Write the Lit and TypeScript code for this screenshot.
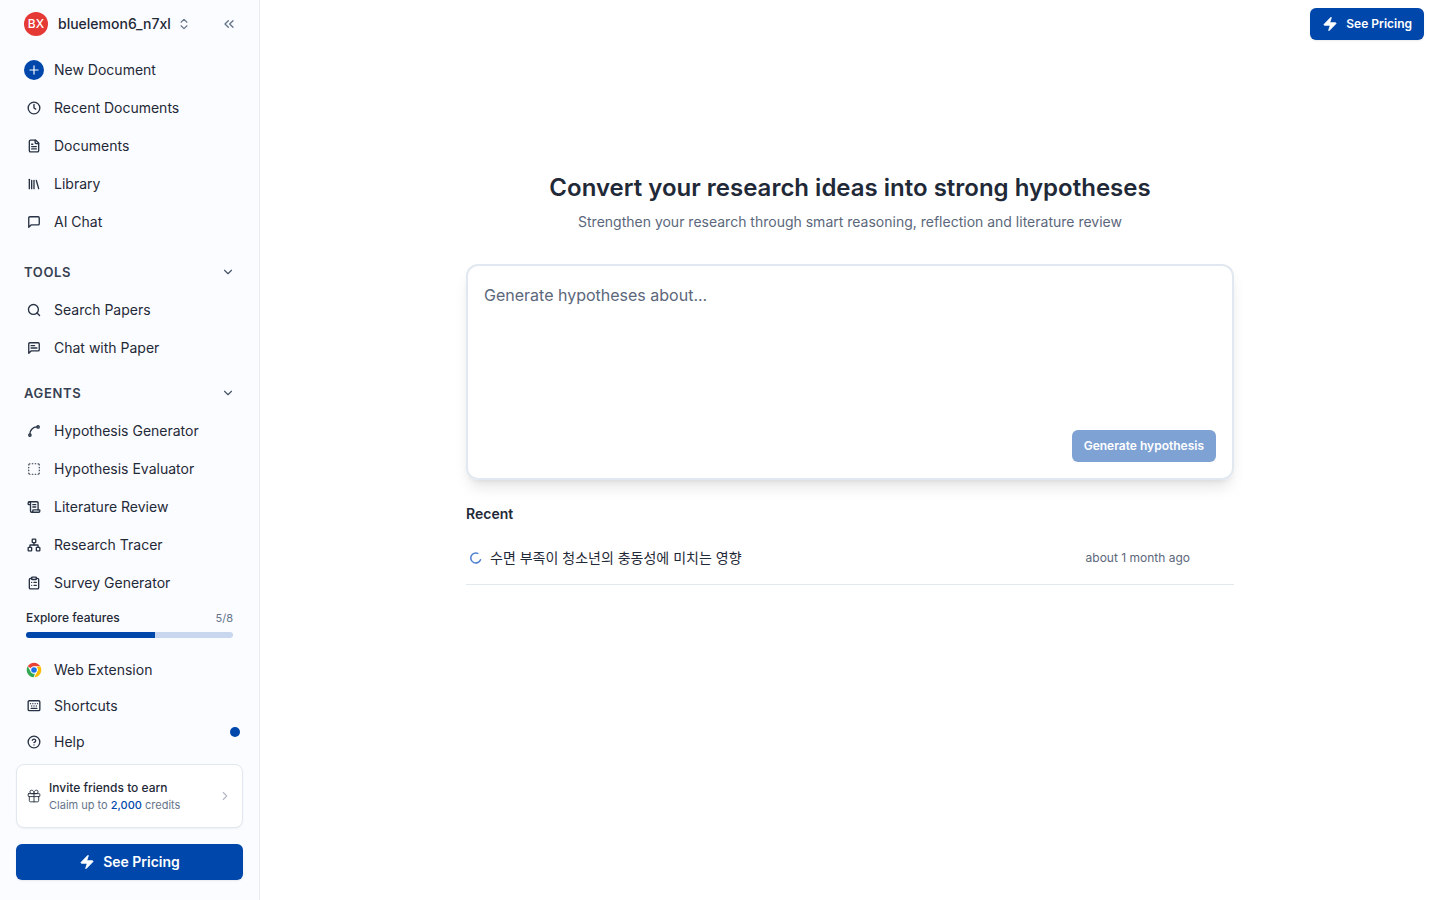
import { LitElement, html, css, svg, nothing, SVGTemplateResult } from "lit";
import { customElement, property } from "lit/decorators.js";

const ICONS: Record<string, SVGTemplateResult> = {
  clock: svg`<circle cx="12" cy="12" r="10"/><path d="M12 6v6l3 2"/>`,
  file: svg`<path d="M15 2H6a2 2 0 0 0-2 2v16a2 2 0 0 0 2 2h12a2 2 0 0 0 2-2V7Z"/><path d="M14 2v4a2 2 0 0 0 2 2h4"/><path d="M10 9H8"/><path d="M16 13H8"/><path d="M16 17H8"/>`,
  library: svg`<path d="m16 6 4 14"/><path d="M12 6v14"/><path d="M8 6v14"/><path d="M4 4v16"/>`,
  chat: svg`<path d="M21 15a2 2 0 0 1-2 2H7l-4 4V5a2 2 0 0 1 2-2h14a2 2 0 0 1 2 2z"/>`,
  search: svg`<circle cx="11" cy="11" r="8.500"/><path d="m21.500 21.500-4.300-4.300"/>`,
  chatText: svg`<path d="M21 15a2 2 0 0 1-2 2H7l-4 4V5a2 2 0 0 1 2-2h14a2 2 0 0 1 2 2z"/><path d="M13 8H7"/><path d="M17 12H7"/>`,
  spline: svg`<circle cx="19" cy="5" r="2"/><circle cx="5" cy="19" r="2"/><path d="M5 17A12 12 0 0 1 17 5"/>`,
  dashed: svg`<path d="M5 3a2 2 0 0 0-2 2"/><path d="M19 3a2 2 0 0 1 2 2"/><path d="M21 19a2 2 0 0 1-2 2"/><path d="M5 21a2 2 0 0 1-2-2"/><path d="M9 3h1"/><path d="M9 21h1"/><path d="M14 3h1"/><path d="M14 21h1"/><path d="M3 9v1"/><path d="M21 9v1"/><path d="M3 14v1"/><path d="M21 14v1"/>`,
  scroll: svg`<path d="M15 12h-5"/><path d="M15 8h-5"/><path d="M19 17V5a2 2 0 0 0-2-2H4"/><path d="M8 21h12a2 2 0 0 0 2-2v-1a1 1 0 0 0-1-1H11a1 1 0 0 0-1 1v1a2 2 0 1 1-4 0V5a2 2 0 1 0-4 0v2a1 1 0 0 0 1 1h3"/>`,
  network: svg`<rect x="16" y="16" width="6" height="6" rx="1"/><rect x="2" y="16" width="6" height="6" rx="1"/><rect x="9" y="2" width="6" height="6" rx="1"/><path d="M5 16v-3a1 1 0 0 1 1-1h12a1 1 0 0 1 1 1v3"/><path d="M12 12V8"/>`,
  clipboard: svg`<rect width="8" height="4" x="8" y="2" rx="1" ry="1"/><path d="M16 4h2a2 2 0 0 1 2 2v14a2 2 0 0 1-2 2H6a2 2 0 0 1-2-2V6a2 2 0 0 1 2-2h2"/><path d="M12 11h4"/><path d="M12 16h4"/><path d="M8 11h.01"/><path d="M8 16h.01"/>`,
  keyboard: svg`<rect x="2" y="3" width="20" height="17" rx="2"/><path d="M6 8h.01"/><path d="M10 8h.01"/><path d="M14 8h.01"/><path d="M18 8h.01"/><path d="M8 12h.01"/><path d="M12 12h.01"/><path d="M16 12h.01"/><path d="M7 16h10"/>`,
  help: svg`<circle cx="12" cy="12" r="10"/><path d="M9.09 9a3 3 0 0 1 5.83 1c0 2-3 3-3 3"/><path d="M12 17h.01"/>`,
  gift: svg`<rect x="2" y="8" width="20" height="5" rx="1"/><path d="M12 8v14"/><path d="M20 13v7a2 2 0 0 1-2 2H6a2 2 0 0 1-2-2v-7"/><path d="M12 8H8a3 3 0 1 1 0-6c3 0 4 3 4 6 0-3 1-6 4-6a3 3 0 1 1 0 6z"/>`,
  plus: svg`<path d="M5 12h14"/><path d="M12 5v14"/>`,
  down: svg`<path d="m6 9 6 6 6-6"/>`,
  right: svg`<path d="m9 18 6-6-6-6"/>`,
  updown: svg`<path d="m7 15 5 5 5-5"/><path d="m7 9 5-5 5 5"/>`,
  collapse: svg`<path d="m11 17-5-5 5-5"/><path d="m18 17-5-5 5-5"/>`,
  bolt: svg`<path fill="currentColor" d="M4 14a1 1 0 0 1-.78-1.630l9.900-10.200a.5.5 0 0 1 .86.460l-1.920 6.020A1 1 0 0 0 13 10h7a1 1 0 0 1 .78 1.630l-9.900 10.200a.5.5 0 0 1-.86-.460l1.920-6.020A1 1 0 0 0 11 14z"/>`,
  spinner: svg`<path d="M21 15.500A10 10 0 1 1 15.500 2.700"/>`,
  chrome: svg`<g stroke="none"><circle cx="12" cy="12" r="11" fill="#fff"/><path fill="#ea4335" d="M2.500 6.500A11 11 0 0 1 21.500 6.500H12a5.500 5.500 0 0 0-4.760 2.750z"/><path fill="#fbbc04" d="M21.500 6.500A11 11 0 0 1 12.500 23l4.260-8.250A5.500 5.500 0 0 0 15.500 7.500z"/><path fill="#34a853" d="M11.500 23A11 11 0 0 1 2.500 6.500l4.740 8.250A5.500 5.500 0 0 0 13.500 17.300z"/><circle cx="12" cy="12" r="5.200" fill="#fff"/><circle cx="12" cy="12" r="4.200" fill="#1a73e8"/></g>`,
};

@customElement("ui-icon")
class UiIcon extends LitElement {
  @property() name = "";
  @property({ type: Number }) size = 14;
  static styles = css`
    :host { display: inline-flex; flex: none; }
    .icon {
      display: block;
      fill: none;
      stroke: currentColor;
      stroke-width: 2;
      stroke-linecap: round;
      stroke-linejoin: round;
    }
    .bolt { stroke-width: 1.2; }
    .gift { stroke-width: 1.5; }
    .spinner { stroke-width: 3; }
    .spline, .file, .library, .chat, .chatText, .scroll, .network, .clipboard, .clock, .keyboard, .help, .search { stroke-width: 2.3; }
  `;
  render() {
    return html`<svg class="icon ${this.name}" width=${this.size} height=${this.size} viewBox="0 0 24 24" aria-hidden="true">${ICONS[this.name] ?? nothing}</svg>`;
  }
}

interface Item {
  icon: string;
  label: string;
}

const PRIMARY: Item[] = [
  { icon: "clock", label: "Recent Documents" },
  { icon: "file", label: "Documents" },
  { icon: "library", label: "Library" },
  { icon: "chat", label: "AI Chat" },
];
const TOOLS: Item[] = [
  { icon: "search", label: "Search Papers" },
  { icon: "chatText", label: "Chat with Paper" },
];
const AGENTS: Item[] = [
  { icon: "spline", label: "Hypothesis Generator" },
  { icon: "dashed", label: "Hypothesis Evaluator" },
  { icon: "scroll", label: "Literature Review" },
  { icon: "network", label: "Research Tracer" },
  { icon: "clipboard", label: "Survey Generator" },
];
const DONE = 5;
const TOTAL = 8;

@customElement("app-root")
class AppRoot extends LitElement {
  static styles = css`
    :host {
      display: flex;
      min-height: 100vh;
      background: #fff;
      color: #1f2937;
      font: 400 14px/20px Inter, "Noto Sans CJK KR", sans-serif;
    }
    * { box-sizing: border-box; }
    button, textarea { font: inherit; color: inherit; border: 0; background: none; padding: 0; margin: 0; cursor: pointer; }
    a { color: inherit; text-decoration: none; }
    h1, h2, p, ul { margin: 0; padding: 0; }
    ul { list-style: none; }

    .sidebar {
      flex: none;
      width: 260px;
      height: 100vh;
      display: flex;
      flex-direction: column;
      background: #fbfcff;
      border-right: 1px solid #e9edf3;
    }
    .account {
      display: flex;
      align-items: center;
      justify-content: space-between;
      height: 48px;
      padding: 0 22px 0 24px;
    }
    .user { display: flex; align-items: center; font-weight: 500; }
    .avatar {
      display: grid;
      place-items: center;
      width: 24px;
      height: 24px;
      margin-right: 10px;
      border-radius: 50%;
      background: #e53935;
      color: #fff;
      font-size: 12px;
    }
    .user ui-icon { margin-left: 6px; }
    .collapse { display: flex; }
    .muted { color: #64748b; }
    .nav { flex: 1; min-height: 0; overflow: hidden; padding: 3px 24px 0; }
    .item { display: flex; align-items: center; gap: 10px; height: 38px; }
    .slot { display: grid; place-items: center; width: 20px; height: 20px; color: #273244; }
    .add { border-radius: 50%; background: #0047ab; color: #fff; }
    .section {
      display: flex;
      align-items: center;
      justify-content: space-between;
      width: 100%;
      height: 38px;
      margin-top: 7px;
      color: #374151;
      font-size: 13px;
      font-weight: 600;
      letter-spacing: 0.05em;
    }
    .primary { margin-bottom: 12px; }
    .section ui-icon { color: #475569; }

    .footer { padding: 8px 16px 20px; }
    .explore { padding: 0 10px; font-size: 12px; line-height: 16px; font-weight: 500; }
    .explore-head { display: flex; justify-content: space-between; }
    .count { color: #64748b; font-size: 11px; font-weight: 400; }
    .track { height: 6px; margin-top: 6px; border-radius: 3px; background: #c8d7ed; overflow: hidden; }
    .fill { height: 100%; background: #0047ab; }
    .links { padding: 14px 8px 4px; }
    .links li { position: relative; }
    .links .item { height: 36px; }
    .dot { position: absolute; top: 3px; right: -5px; width: 10px; height: 10px; border-radius: 50%; background: #0047ab; }
    .invite {
      display: flex;
      align-items: center;
      height: 64px;
      padding: 0 10px;
      gap: 8px;
      border: 1px solid #e2e8f0;
      border-radius: 8px;
      background: #fff;
      box-shadow: 0 1px 2px rgb(0 0 0 / 5%);
    }
    .invite-text { flex: 1; font-size: 11px; line-height: 16px; color: #64748b; }
    .invite-title { font-size: 12px; line-height: 18px; font-weight: 500; color: #1f2937; }
    .credits { color: #0047ab; font-weight: 500; }
    .faint { color: #b4bbc6; }
    .btn {
      display: flex;
      align-items: center;
      justify-content: center;
      gap: 8px;
      height: 32px;
      padding: 0 12px;
      border-radius: 6px;
      background: #0047ab;
      color: #fff;
      font-size: 12px;
      font-weight: 600;
      box-shadow: 0 1px 2px rgb(0 0 0 / 8%);
    }
    .btn-wide { width: 100%; height: 36px; margin-top: 16px; font-size: 14px; }
    .btn-off { opacity: .5; box-shadow: none; }

    .main { flex: 1; min-width: 0; }
    .topbar { display: flex; justify-content: flex-end; padding: 8px 16px; }
    .content { max-width: 768px; margin: 124px auto 0; }
    h1 { font-size: 24px; line-height: 32px; font-weight: 600; text-align: center; }
    .lead { margin-top: 8px; text-align: center; color: #5b677b; }
    .composer {
      display: flex;
      flex-direction: column;
      align-items: flex-end;
      margin-top: 32px;
      padding: 16px;
      border: 2px solid #e2e8f0;
      border-radius: 12px;
      box-shadow: 0 10px 15px -3px rgb(0 0 0 / 10%), 0 4px 6px -4px rgb(0 0 0 / 10%);
    }
    textarea { display: block; width: 100%; height: 148px; padding-top: 1px; resize: none; outline: 0; font-size: 16px; line-height: 24px; cursor: text; }
    textarea::placeholder { color: #5b677b; opacity: 1; }
    h2 { margin-top: 24px; font-size: 14px; line-height: 20px; font-weight: 600; }
    .recent { display: flex; align-items: center; margin-top: 8px; padding: 16px 44px 16px 4px; border-bottom: 1px solid #e2e8f0; }
    .recent ui-icon { margin-right: 8px; color: #4c7fd0; }
    .recent-name { flex: 1; }
    .time { font-size: 12px; color: #5b677b; }
  `;

  private list(items: Item[], cls = "") {
    return html`<ul class=${cls}>
      ${items.map(
        (i) => html`<li><a class="item" href="#"><span class="slot"><ui-icon name=${i.icon}></ui-icon></span>${i.label}</a></li>`
      )}
    </ul>`;
  }

  private section(label: string) {
    return html`<button class="section" type="button" aria-expanded="true">${label}<ui-icon name="down" size="14"></ui-icon></button>`;
  }

  render() {
    return html`
      <aside class="sidebar">
        <div class="account">
          <button class="user" type="button"><span class="avatar">BX</span>bluelemon6_n7xl<ui-icon class="muted" name="updown" size="14"></ui-icon></button>
          <button class="collapse muted" type="button" aria-label="Collapse sidebar"><ui-icon name="collapse" size="16"></ui-icon></button>
        </div>
        <nav class="nav">
          <a class="item" href="#"><span class="slot add"><ui-icon name="plus" size="14"></ui-icon></span>New Document</a>
          ${this.list(PRIMARY, "primary")}
          ${this.section("TOOLS")} ${this.list(TOOLS)}
          ${this.section("AGENTS")} ${this.list(AGENTS)}
        </nav>
        <div class="footer">
          <div class="explore">
            <div class="explore-head"><span>Explore features</span><span class="count">${DONE}/${TOTAL}</span></div>
            <div class="track"><div class="fill" style="width:${(DONE / TOTAL) * 100}%"></div></div>
          </div>
          <ul class="links">
            <li><a class="item" href="#"><span class="slot"><ui-icon name="chrome" size="16"></ui-icon></span>Web Extension</a></li>
            <li><a class="item" href="#"><span class="slot"><ui-icon name="keyboard" size="14"></ui-icon></span>Shortcuts</a></li>
            <li><a class="item" href="#"><span class="slot"><ui-icon name="help" size="14"></ui-icon></span>Help</a><span class="dot"></span></li>
          </ul>
          <a class="invite" href="#">
            <ui-icon name="gift" size="14"></ui-icon>
            <div class="invite-text">
              <p class="invite-title">Invite friends to earn</p>
              <p>Claim up to <span class="credits">2,000</span> credits</p>
            </div>
            <ui-icon class="faint" name="right" size="14"></ui-icon>
          </a>
          <button class="btn btn-wide" type="button"><ui-icon name="bolt" size="16"></ui-icon>See Pricing</button>
        </div>
      </aside>
      <main class="main">
        <div class="topbar"><button class="btn" type="button"><ui-icon name="bolt" size="16"></ui-icon>See Pricing</button></div>
        <div class="content">
          <h1>Convert your research ideas into strong hypotheses</h1>
          <p class="lead">Strengthen your research through smart reasoning, reflection and literature review</p>
          <form class="composer">
            <textarea aria-label="Hypothesis topic" placeholder="Generate hypotheses about..."></textarea>
            <button class="btn btn-off" type="button" disabled>Generate hypothesis</button>
          </form>
          <h2>Recent</h2>
          <a class="recent" href="#">
            <ui-icon name="spinner" size="12"></ui-icon>
            <span class="recent-name" lang="ko">수면 부족이 청소년의 충동성에 미치는 영향</span>
            <span class="time">about 1 month ago</span>
          </a>
        </div>
      </main>
    `;
  }
}
